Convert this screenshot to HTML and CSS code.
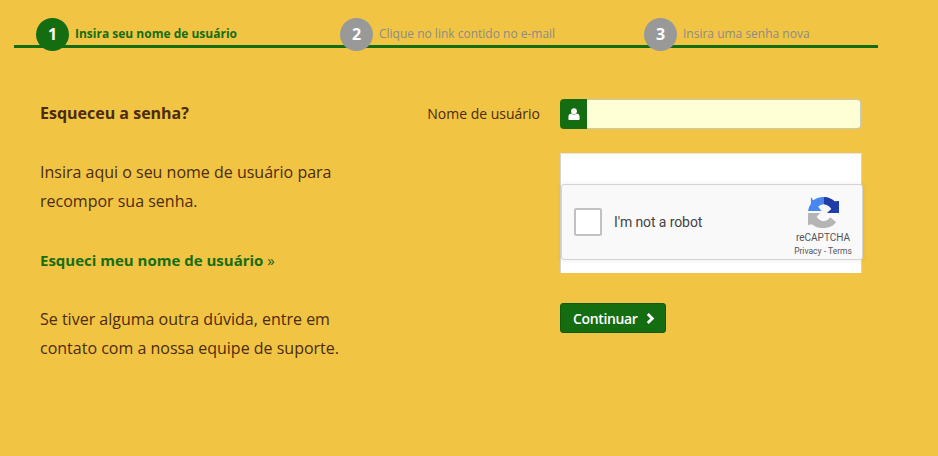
FILE: index.html
```html
<!DOCTYPE html>
<html lang="pt-BR">
<head>
<meta charset="utf-8">
<title>Esqueceu a senha?</title>
<link rel="stylesheet" href="styles.css">
</head>
<body>
<ol class="steps">
  <li class="step step-active"><span class="step-num">1</span><span class="step-label">Insira seu nome de usuário</span></li>
  <li class="step"><span class="step-num">2</span><span class="step-label">Clique no link contido no e-mail</span></li>
  <li class="step"><span class="step-num">3</span><span class="step-label">Insira uma senha nova</span></li>
</ol>
<main class="content">
  <section class="info">
    <h1 class="title">Esqueceu a senha?</h1>
    <p class="para para-first">Insira aqui o seu nome de usuário para<br>recompor sua senha.</p>
    <p class="para"><a class="link" href="#">Esqueci meu nome de usuário <span class="raquo">»</span></a></p>
    <p class="para">Se tiver alguma outra dúvida, entre em<br>contato com a nossa equipe de suporte.</p>
  </section>
  <form class="form">
    <div class="field">
      <label class="field-label" for="user">Nome de usuário</label>
      <div class="input-group">
        <span class="addon">
          <svg class="user-icon" viewBox="0 0 12 12" width="12" height="12" aria-hidden="true"><circle cx="6" cy="3.2" r="2.9" fill="#fff"/><path d="M.4 11.2V9c0-1.900 1.200-3.100 2.600-3.400.8.6 1.900 1 3 1s2.200-.4 3-1c1.400.3 2.600 1.500 2.600 3.400v2.200c0 .4-.3.8-.8.8H1.200c-.5 0-.8-.4-.8-.8z" fill="#fff"/></svg>
        </span>
        <input class="input" id="user" type="text">
      </div>
    </div>
    <div class="captcha-wrap">
      <div class="captcha">
        <span class="checkbox"></span>
        <span class="captcha-text">I'm not a robot</span>
        <div class="captcha-brand">
          <svg class="captcha-logo" viewBox="0 0 32 32" width="31" height="31" aria-hidden="true">
            <path d="M0 16.500H12.500L9 20.500A9 9 0 0 0 16 25A9 9 0 0 0 23 21L29 26A16 16 0 0 1 16 32A16 16 0 0 1 4 28L0 29Z" fill="#b5b5b5"/>
            <path d="M3 0L5.300 3.300A17 17 0 0 1 16 0V7.500A9 9 0 0 0 10.500 10L14 14.500H0A16 16 0 0 1 3 7Z" fill="#4a86f0"/>
            <path d="M16 0A16 16 0 0 1 27.500 4.500L32 4V16.500H19.500L24 12.500A10 10 0 0 0 16 7.500Z" fill="#1f3da8"/>
          </svg>
          <span class="captcha-name">reCAPTCHA</span>
          <span class="captcha-links">Privacy - Terms</span>
        </div>
      </div>
    </div>
    <button class="btn" type="button">Continuar
      <svg class="chev" viewBox="0 0 9 11" width="9" height="11" aria-hidden="true"><path d="M1.800 1 6.300 5.500 1.800 10" fill="none" stroke="#fff" stroke-width="2.800"/></svg>
    </button>
  </form>
</main>
</body>
</html>
```
FILE: styles.css
```css
* { box-sizing: border-box; }
html, body { margin: 0; padding: 0; }
body {
  width: 938px;
  height: 456px;
  overflow: hidden;
  background: #f1c443;
  color: #4c2b10;
  font-family: "Open Sans", "Liberation Sans", sans-serif;
  font-size: 16px;
}
.steps {
  display: flex;
  list-style: none;
  width: 864px;
  height: 30px;
  margin: 18px 0 0 14px;
  padding: 0 0 0 22px;
  border-bottom: 3px solid #156d12;
}
.step {
  display: flex;
  align-items: flex-start;
  width: 304px;
  height: 33px;
  flex: none;
}
.step-num {
  width: 33px;
  height: 33px;
  flex: none;
  border-radius: 50%;
  background: #999;
  color: #fff;
  font-weight: 700;
  font-size: 16px;
  line-height: 33px;
  text-align: center;
}
.step-label {
  margin-left: 6px;
  font-size: 12px;
  line-height: 32px;
  color: #8c8c86;
}
.step-active .step-num { background: #156d12; }
.step-active .step-label { color: #156d12; font-weight: 700; }
.content {
  display: flex;
  padding: 51px 0 0 40px;
}
.info { width: 520px; flex: none; }
.title {
  margin: 0;
  font-size: 16px;
  font-weight: 700;
  line-height: 29px;
}
.para {
  margin: 0 0 30px;
  font-size: 16px;
  line-height: 29px;
}
.para-first { margin-top: 30px; }
.link { color: #156d12; font-size: 15px; font-weight: 700; text-decoration: none; }
.raquo { font-weight: 400; color: #1a5a1a; }
.form { width: 304px; flex: none; display: flex; flex-direction: column; align-items: flex-start; }
.field { position: relative; }
.field-label {
  position: absolute;
  right: 100%;
  margin-right: 20px;
  top: 0;
  font-size: 14px;
  line-height: 29px;
  white-space: nowrap;
}
.input-group { display: flex; width: 301px; height: 30px; }
.addon {
  width: 27px;
  flex: none;
  display: flex;
  align-items: center;
  justify-content: center;
  background: #156d12;
  border-radius: 4px 0 0 4px;
}
.input {
  flex: 1;
  min-width: 0;
  height: 30px;
  padding: 0 8px;
  background: #ffffd6;
  border: 1px solid #c9c9b8;
  border-left: 0;
  border-radius: 0 4px 4px 0;
  outline: 0;
}
.captcha-wrap {
  width: 302px;
  height: 120px;
  margin-top: 24px;
  padding-top: 30px;
  background: #fff;
  border: 1px solid #d3d3d3;
  border-top-color: #e4e4e4;
  border-bottom: 0;
}
.captcha {
  display: flex;
  align-items: center;
  width: 302px;
  height: 76px;
  padding-left: 12px;
  background: #f9f9f9;
  border: 1px solid #d3d3d3;
  border-radius: 3px;
  box-shadow: 0 0 4px 1px rgba(0, 0, 0, .06);
  font-family: Roboto, "Liberation Sans", sans-serif;
  color: #444;
}
.checkbox {
  width: 28px;
  height: 28px;
  flex: none;
  background: #fff;
  border: 2px solid #c1c1c1;
  border-radius: 2px;
}
.captcha-text { margin-left: 12px; font-size: 14px; letter-spacing: -.1px; flex: 1; }
.captcha-brand {
  width: 70px;
  flex: none;
  margin-right: 4px;
  display: flex;
  flex-direction: column;
  align-items: center;
  color: #555;
}
.captcha-logo { margin-top: 8px; }
.captcha-name { font-size: 10px; line-height: 12px; margin-top: 4px; }
.captcha-links { font-size: 8.500px; line-height: 10px; margin-top: 2px; white-space: nowrap; color: #555; }
.btn {
  display: flex;
  align-items: center;
  gap: 8px;
  width: 106px;
  height: 30px;
  margin-top: 30px;
  padding: 0 0 0 12px;
  background: #156d12;
  border: 1px solid #0f5a0d;
  border-radius: 3px;
  color: #fff;
  font-family: inherit;
  font-size: 14px;
  font-weight: 600;
  letter-spacing: -.35px;
}
.chev { flex: none; }
```
